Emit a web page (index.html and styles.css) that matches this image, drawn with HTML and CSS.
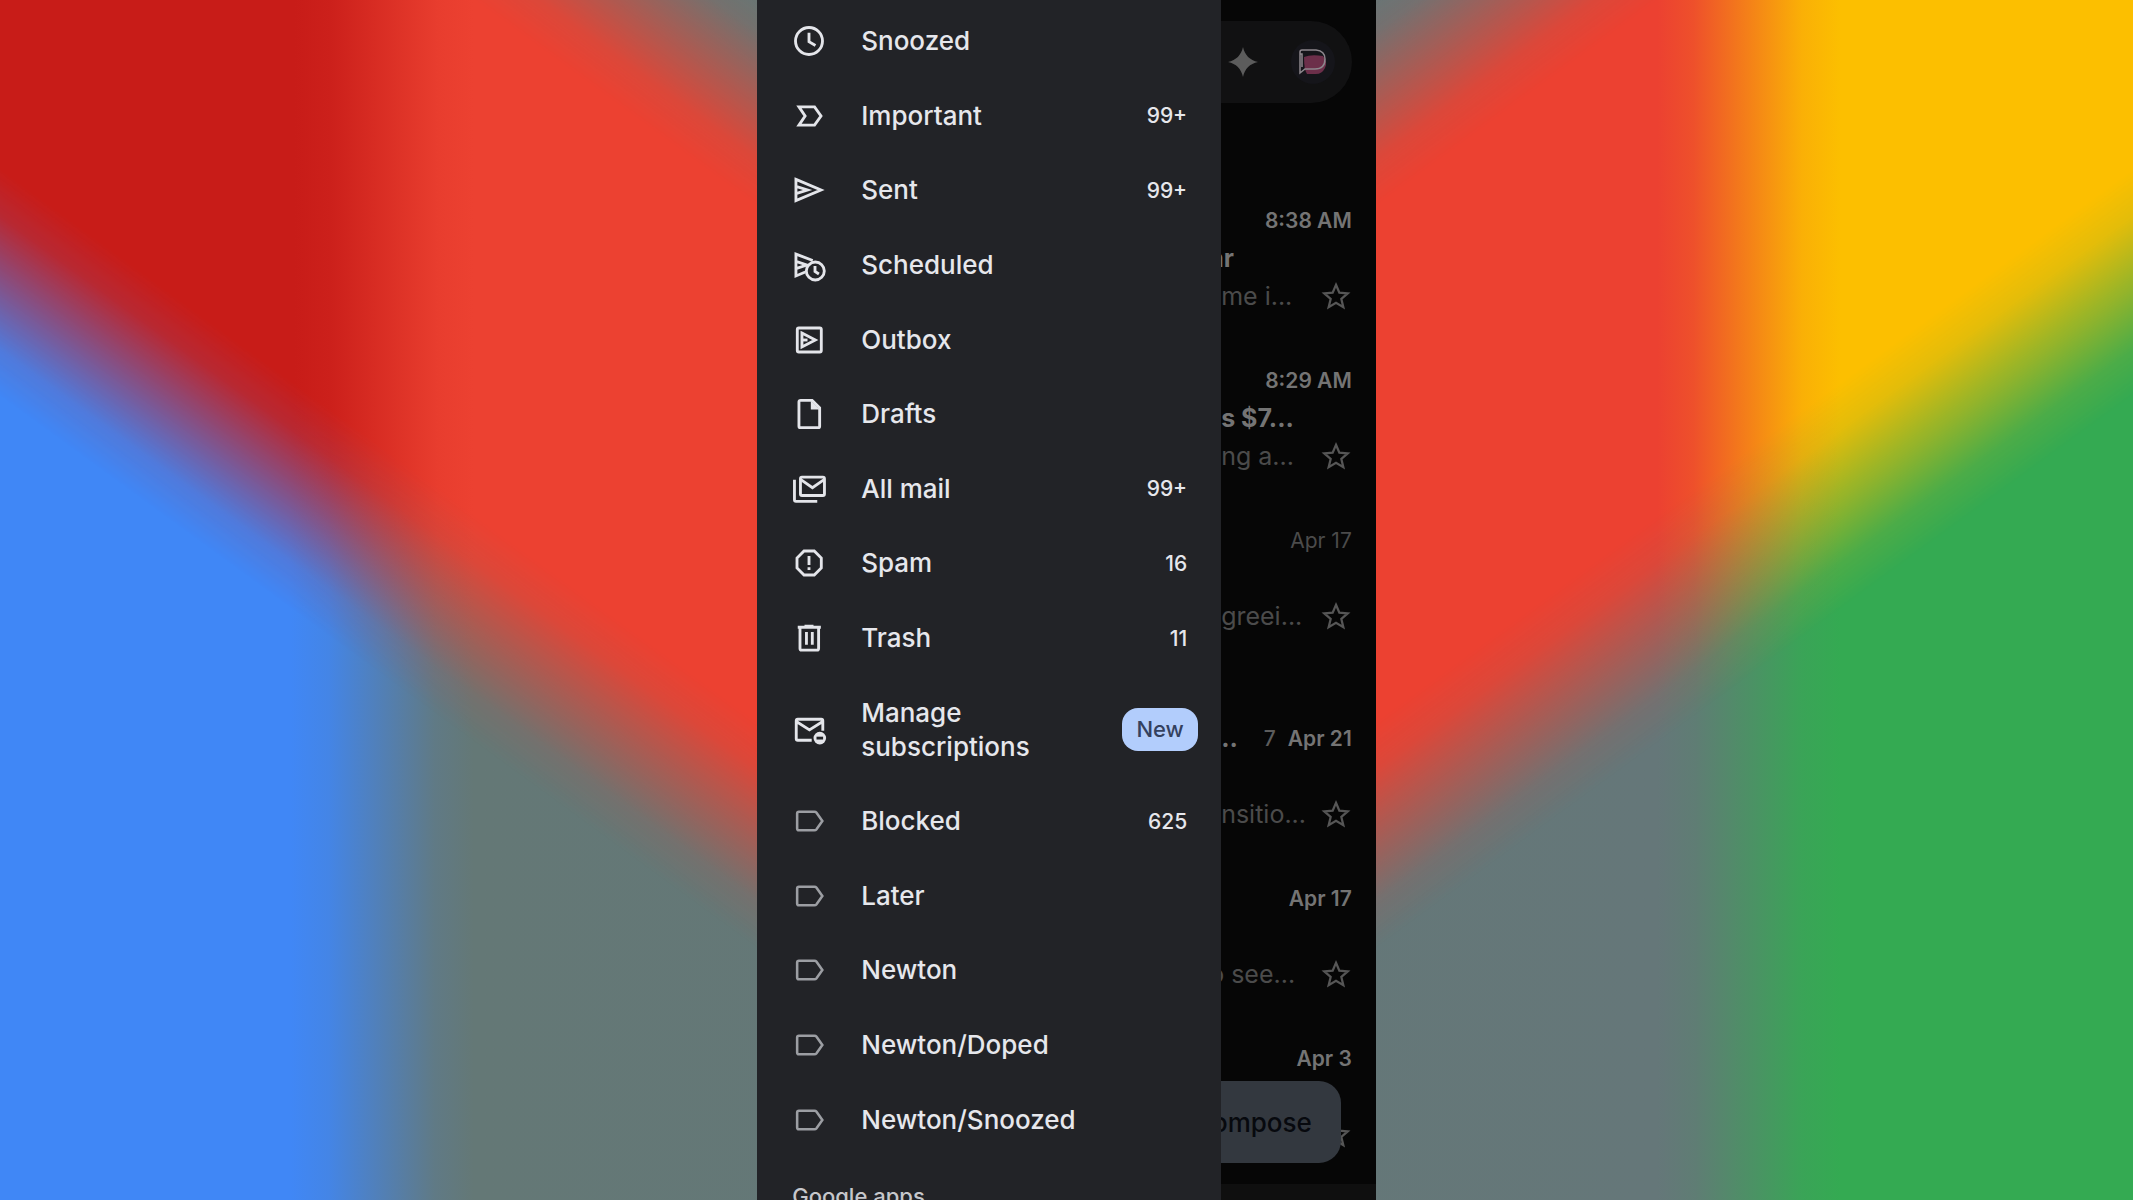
FILE: index.html
```html
<!DOCTYPE html>
<html lang="en">
<head>
<meta charset="utf-8">
<meta name="viewport" content="width=device-width, initial-scale=1">
<title>Mail</title>
<link rel="stylesheet" href="styles.css">
</head>
<body>
<svg class="backdrop" viewBox="0 0 2133 1200" preserveAspectRatio="xMidYMid slice" aria-hidden="true">
  <defs>
    <linearGradient id="base" gradientUnits="userSpaceOnUse" x1="0" y1="0" x2="2133" y2="0">
      <stop offset="0.136" stop-color="#4087f6"/>
      <stop offset="0.154" stop-color="#4485e6"/>
      <stop offset="0.204" stop-color="#607a85"/>
      <stop offset="0.222" stop-color="#647876"/>
      <stop offset="0.777" stop-color="#657779"/>
      <stop offset="0.795" stop-color="#5f7d74"/>
      <stop offset="0.845" stop-color="#3aa457"/>
      <stop offset="0.863" stop-color="#34aa52"/>
    </linearGradient>
    <linearGradient id="band" gradientUnits="userSpaceOnUse" x1="0" y1="0" x2="2133" y2="0">
      <stop offset="0.138" stop-color="#c81c18"/>
      <stop offset="0.155" stop-color="#cc201b"/>
      <stop offset="0.205" stop-color="#e83d2e"/>
      <stop offset="0.222" stop-color="#ec4131"/>
      <stop offset="0.777" stop-color="#ec4131"/>
      <stop offset="0.794" stop-color="#ee502b"/>
      <stop offset="0.845" stop-color="#fab006"/>
      <stop offset="0.863" stop-color="#fcbf00"/>
    </linearGradient>
    <linearGradient id="slope" gradientUnits="userSpaceOnUse" x1="812" y1="24" x2="348" y2="660">
      <stop offset="0" stop-color="#fff" stop-opacity="0"/>
      <stop offset="0.048" stop-color="#fff" stop-opacity="0.120"/>
      <stop offset="0.180" stop-color="#fff" stop-opacity="0.880"/>
      <stop offset="0.228" stop-color="#fff"/>
      <stop offset="0.757" stop-color="#fff"/>
      <stop offset="0.805" stop-color="#fff" stop-opacity="0.880"/>
      <stop offset="0.942" stop-color="#fff" stop-opacity="0.120"/>
      <stop offset="0.990" stop-color="#fff" stop-opacity="0"/>
    </linearGradient>
    <mask id="vee" maskUnits="userSpaceOnUse" x="0" y="0" width="2133" height="1200">
      <rect id="wing" width="1066" height="1200" fill="url(#slope)"/>
      <use href="#wing" transform="translate(2133 0) scale(-1 1)"/>
    </mask>
    <symbol id="star" viewBox="0 0 24 24"><path d="M12 3.600l2.500 5.900 6.300.5-4.800 4.200 1.500 6.200-5.500-3.300-5.500 3.300 1.500-6.200L3.200 10l6.300-.5z"/></symbol>
    <symbol id="label" viewBox="0 0 24 24"><path d="M5.300 5.800h10.300c.6 0 1 .2 1.300.6l4 5.600-4 5.600c-.3.400-.7.600-1.300.6H5.300c-.8 0-1.200-.5-1.200-1.200V7c0-.7.400-1.200 1.200-1.200z"/></symbol>
  </defs>
  <rect width="2133" height="1200" fill="url(#base)"/>
  <rect width="2133" height="1200" fill="url(#band)" mask="url(#vee)"/>
</svg>

<main class="phone">
  <nav class="drawer" aria-label="Folders">
    <ul class="folders">
      <li class="folder"><a class="link" href="#"><svg class="icon" viewBox="0 0 24 24"><circle cx="12" cy="12" r="9"/><path d="M12 6.500v6l4.300 2.500"/></svg><span class="name">Snoozed</span></a></li>
      <li class="folder"><a class="link" href="#"><svg class="icon" viewBox="0 0 24 24"><path d="M5.300 5.900h10.400l4.300 6.100-4.300 6.100H5.300L9.400 12z"/></svg><span class="name">Important</span><span class="count">99+</span></a></li>
      <li class="folder"><a class="link" href="#"><svg class="icon" viewBox="0 0 24 24"><path d="M3.300 4.900L20 12 3.300 19.100zM3.300 9.600l7.700 2.400-7.700 2.400"/></svg><span class="name">Sent</span><span class="count">99+</span></a></li>
      <li class="folder"><a class="link" href="#"><svg class="icon" viewBox="0 0 24 24"><path d="M14.500 9L3.300 4.700v14.600l6.200-2.600M3.300 9.600l7.200 2.400-7.200 2.400"/><circle cx="16.200" cy="16" r="6"/><path d="M16 12.600v3.700l2.600 1.700"/></svg><span class="name">Scheduled</span></a></li>
      <li class="folder"><a class="link" href="#"><svg class="icon" viewBox="0 0 24 24"><rect x="4.200" y="4" width="16" height="16" rx="1"/><path d="M7.300 7.400L16.200 12l-8.900 4.600z"/><path d="M7.300 12H11"/></svg><span class="name">Outbox</span></a></li>
      <li class="folder"><a class="link" href="#"><svg class="icon" viewBox="0 0 24 24"><path d="M6.500 2.900h7.600l5 5v12.200c0 .6-.4 1-1 1H6.300c-.6 0-1-.4-1-1V3.900c0-.6.4-1 1.200-1z"/><path class="solid" d="M13.200 3l6 6h-6z"/></svg><span class="name">Drafts</span></a></li>
      <li class="folder"><a class="link" href="#"><svg class="icon" viewBox="0 0 24 24"><rect x="6.300" y="4.100" width="16" height="12.200" rx="1"/><path d="M6.600 5.800l7.700 5.300L22 5.800M2.300 5.800v13.400c0 .6.400 1 1 1h14.200"/></svg><span class="name">All mail</span><span class="count">99+</span></a></li>
      <li class="folder"><a class="link" href="#"><svg class="icon" viewBox="0 0 24 24"><path d="M8.700 4h6.800L20.200 8.700v6.600L15.500 20H8.700L4 15.300V8.700zM12 7.300v6M12 14.900v1.800"/></svg><span class="name">Spam</span><span class="count">16</span></a></li>
      <li class="folder"><a class="link" href="#"><svg class="icon" viewBox="0 0 24 24"><path d="M4.500 4.800h15.400M9 4.100h6M6 5v14c0 .7.400 1.100 1 1.100h10.400c.6 0 1-.4 1-1.100V5M10.300 8v8.500M14.200 8v8.500"/></svg><span class="name">Trash</span><span class="count">11</span></a></li>
      <li class="folder tall"><a class="link" href="#"><svg class="icon" viewBox="0 0 24 24"><path d="M21.200 12.500V5.800c0-.6-.4-1-1-1H4.500c-.6 0-1 .4-1 1v12c0 .6.400 1 1 1h9.300M3.800 6.500l8.500 5.400 8.600-5.400"/><circle class="solid" cx="19.200" cy="17.400" r="4.200"/><path class="cut" d="M17 17.400h4.400"/></svg><span class="name">Manage subscriptions</span><span class="badge">New</span></a></li>
      <li class="folder"><a class="link" href="#"><svg class="icon muted"><use href="#label"/></svg><span class="name">Blocked</span><span class="count">625</span></a></li>
      <li class="folder"><a class="link" href="#"><svg class="icon muted"><use href="#label"/></svg><span class="name">Later</span></a></li>
      <li class="folder"><a class="link" href="#"><svg class="icon muted"><use href="#label"/></svg><span class="name">Newton</span></a></li>
      <li class="folder"><a class="link" href="#"><svg class="icon muted"><use href="#label"/></svg><span class="name">Newton/Doped</span></a></li>
      <li class="folder"><a class="link" href="#"><svg class="icon muted"><use href="#label"/></svg><span class="name">Newton/Snoozed</span></a></li>
    </ul>
    <h2 class="section">Google apps</h2>
  </nav>

  <section class="inbox" aria-label="Inbox">
    <header class="search">
      <svg class="spark" viewBox="0 0 30 30" aria-hidden="true"><path d="M15 0c1.800 8.200 6.800 13.200 15 15-8.200 1.800-13.200 6.800-15 15-1.800-8.200-6.800-13.200-15-15C8.200 13.200 13.200 8.200 15 0z"/></svg>
      <svg class="avatar" viewBox="0 0 46 46" aria-hidden="true">
        <circle cx="23" cy="23" r="22" fill="#15151a"/>
        <path d="M14 18q7-3 19-1 5 6 2 12-3 6-9 6H17q-3-4-3-17z" fill="#6c2f4a"/>
        <path d="M10 15v-2q0-2 2-2h14q9 1 9 9 0 10-10 10H15l-5 4V15h2v13" fill="none" stroke="#8d878d" stroke-width="1.500"/>
      </svg>
    </header>
    <ul class="messages">
      <li class="message unread"><time class="time">8:38 AM</time><b class="subject tucked">ar</b><span class="snippet">me i...</span><button class="star" aria-label="Star"><svg><use href="#star"/></svg></button></li>
      <li class="message unread"><time class="time">8:29 AM</time><b class="subject">s $7...</b><span class="snippet">ng a...</span><button class="star" aria-label="Star"><svg><use href="#star"/></svg></button></li>
      <li class="message last"><time class="time">Apr 17</time><span class="snippet">greei...</span><button class="star" aria-label="Star"><svg><use href="#star"/></svg></button></li>
      <li class="message unread"><b class="sender">..</b><span class="total">7</span><time class="time">Apr 21</time><span class="snippet">nsitio...</span><button class="star" aria-label="Star"><svg><use href="#star"/></svg></button></li>
      <li class="message unread"><time class="time">Apr 17</time><span class="snippet tucked">o see...</span><button class="star" aria-label="Star"><svg><use href="#star"/></svg></button></li>
      <li class="message unread"><time class="time">Apr 3</time><button class="star" aria-label="Star"><svg><use href="#star"/></svg></button></li>
    </ul>
    <button class="compose">Compose</button>
    <div class="bottom-bar"></div>
  </section>
</main>
</body>
</html>
```
FILE: styles.css
```css
* { box-sizing: border-box; }

body {
  margin: 0;
  height: 100vh;
  overflow: hidden;
  font-family: Inter, Roboto, sans-serif;
  background: #647876;
}

ul { margin: 0; padding: 0; list-style: none; }

button { padding: 0; border: 0; font: inherit; }

.backdrop {
  position: fixed;
  inset: 0;
  width: 100%;
  height: 100%;
}

.phone {
  position: relative;
  display: flex;
  width: 29%;
  height: 100vh;
  margin: 0 auto;
  background: #060606;
}

/* Navigation drawer */
.drawer {
  display: flex;
  flex-direction: column;
  flex: 0 0 75%;
  padding-top: 4px;
  background: #222327;
  overflow: hidden;
}

.folders {
  display: flex;
  flex: 1;
  flex-direction: column;
}

.folder { display: flex; flex: 1 0 74px; }
.folder.tall { flex-basis: 108px; }

.link {
  display: flex;
  flex: 1;
  align-items: center;
  padding: 0 23px 0 34px;
  color: #e6e7ec;
  text-decoration: none;
}

.icon {
  flex: none;
  width: 36px;
  height: 36px;
  margin-right: 34px;
  fill: none;
  stroke: #e4e5ea;
  stroke-width: 1.9;
}

.icon.muted { stroke: #9c9ea3; stroke-width: 1.7; }
.icon .solid { fill: #e4e5ea; stroke: none; }
.icon .cut { stroke: #222327; }

.name {
  flex: 1;
  font-size: 26px;
  font-weight: 500;
  line-height: 34px;
}

.count {
  margin-right: 11px;
  font-size: 21px;
  font-weight: 500;
}

.badge {
  width: 76px;
  border-radius: 16px;
  background: #b2cdfc;
  color: #34415f;
  font-size: 22px;
  font-weight: 500;
  line-height: 43px;
  text-align: center;
}

.section {
  flex: none;
  height: 43px;
  margin: 0;
  padding: 25px 35px 0;
  color: #c6c7cb;
  font-size: 22px;
  font-weight: 500;
  line-height: 28px;
}

/* Dimmed inbox beside the drawer */
.inbox {
  position: relative;
  flex: 1;
  min-width: 0;
  overflow: hidden;
}

.search {
  display: flex;
  align-items: center;
  justify-content: flex-end;
  gap: 32px;
  height: 82px;
  margin: 21px 24px 75px 0;
  padding-right: 16px;
  border-radius: 0 41px 41px 0;
  background: #111112;
}

.spark { flex: none; width: 30px; height: 30px; fill: #5c5c5c; }
.avatar { flex: none; width: 46px; height: 46px; }

.message {
  display: grid;
  grid-template: 38px 38px 38px / 1fr auto auto;
  align-items: center;
  height: 160px;
  padding: 23px 24px 23px 0;
  color: #4b4b4b;
  font-size: 25px;
  white-space: nowrap;
}

.message.last { margin-bottom: 38px; }

.sender { grid-area: 1 / 1; color: #747474; }
.total { grid-area: 1 / 2; margin-right: 12px; color: #5c5c5c; font-size: 21px; font-weight: 500; }
.time { grid-area: 1 / 3; font-size: 21px; }
.unread .time { color: #747474; font-weight: 600; }
.subject { grid-area: 2 / 1 / 3 / 4; color: #747474; }
.snippet { grid-area: 3 / 1 / 4 / 4; }
.tucked { margin-left: -12px; }

.star {
  grid-area: 3 / 1 / 4 / 4;
  justify-self: end;
  width: 32px;
  height: 32px;
  background: none;
}

.star svg {
  display: block;
  width: 32px;
  height: 32px;
  fill: none;
  stroke: #565656;
  stroke-width: 1.7;
}

.compose {
  position: absolute;
  right: 35px;
  bottom: 37px;
  display: flex;
  align-items: center;
  justify-content: flex-end;
  width: 200px;
  height: 82px;
  padding-right: 29px;
  border-radius: 22px;
  background: #33383f;
  color: #07090e;
  font-size: 26px;
  font-weight: 500;
}

.bottom-bar {
  position: absolute;
  inset: auto 0 0;
  height: 16px;
  background: #0f0f0f;
}
```
